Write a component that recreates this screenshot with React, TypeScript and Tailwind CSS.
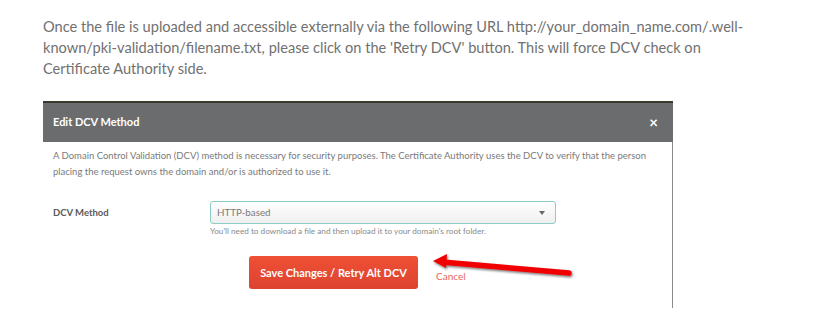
import React from "react";

const FONT = { fontFamily: "Lato, 'Open Sans', sans-serif" };

function Arrow() {
  return (
    <svg className="absolute left-[428px] top-[250px]" width="150" height="32" viewBox="0 0 150 32">
      <defs>
        <filter id="sh" x="-10%" y="-50%" width="120%" height="200%">
          <feDropShadow dx="1" dy="1.5" stdDeviation="1.2" floodColor="#000" floodOpacity="0.55" />
        </filter>
      </defs>
      <g filter="url(#sh)">
        <line x1="14" y1="12" x2="141" y2="23" stroke="#f00000" strokeWidth="5.5" strokeLinecap="round" />
        <polygon points="5,11 19,4 18,18" fill="#f00000" />
      </g>
    </svg>
  );
}

export default function App() {
  return (
    <div className="relative min-h-[328px] w-[837px] bg-white" style={FONT}>
      {/* Intro paragraph */}
      <p className="w-[765px] pl-[43px] pt-[16px] text-[14.6px] leading-[21px] text-[#717171]">
        Once the file is uploaded and accessible externally via the following URL http://your_domain_name.com/.well-known/pki-validation/filename.txt, please click on the 'Retry DCV' button. This will force DCV check on Certificate Authority side.
      </p>

      {/* Modal */}
      <div className="ml-[43px] mt-[22px] w-[630px]">
        <div className="h-[2px] bg-[#3a3a2c]" />
        <div className="flex h-[39px] items-center justify-between bg-[#6b6c6e] pl-[10px] pr-[15px]">
          <span className="text-[11px] font-bold text-white">Edit DCV Method</span>
          <span className="text-[15px] font-bold leading-none text-white">×</span>
        </div>
        <div className="h-[166px] border-r border-[#8a8a8a] bg-white pl-[10px] pr-[10px]">
          <p className="pt-[6px] text-[9.5px] leading-[16px] text-[#7a7a7a]">
            A Domain Control Validation (DCV) method is necessary for security purposes. The Certificate Authority uses the DCV to verify that the person placing the request owns the domain and/or is authorized to use it.
          </p>

          <div className="mt-[21px] flex">
            <div className="w-[157px] pt-[5px] text-[9.5px] font-bold text-[#5a5a5a]">DCV Method</div>
            <div>
              <div className="flex h-[23px] w-[346px] items-center justify-between rounded-[3px] border border-[#8ecdc6] bg-gradient-to-b from-white to-[#efefef] pl-[6px] pr-[10px]">
                <span className="text-[9.8px] text-[#7a7a7a]">HTTP-based</span>
                <span className="h-0 w-0 border-x-[3.5px] border-t-[4px] border-x-transparent border-t-[#666]" />
              </div>
              <div className="mt-[1px] text-[8.2px] text-[#8a8a8a]">
                You'll need to download a file and then upload it to your domain's root folder.
              </div>
            </div>
          </div>

          <div className="mt-[19px] flex items-center pl-[196px]">
            <button className="h-[33px] w-[169px] rounded-[3px] bg-gradient-to-b from-[#ef5035] to-[#dc4330] text-[11px] font-bold text-white">
              Save Changes / Retry Alt DCV
            </button>
            <span className="ml-[18px] mt-[8px] text-[10px] text-[#e8675a]">Cancel</span>
          </div>
        </div>
      </div>

      <Arrow />
    </div>
  );
}
